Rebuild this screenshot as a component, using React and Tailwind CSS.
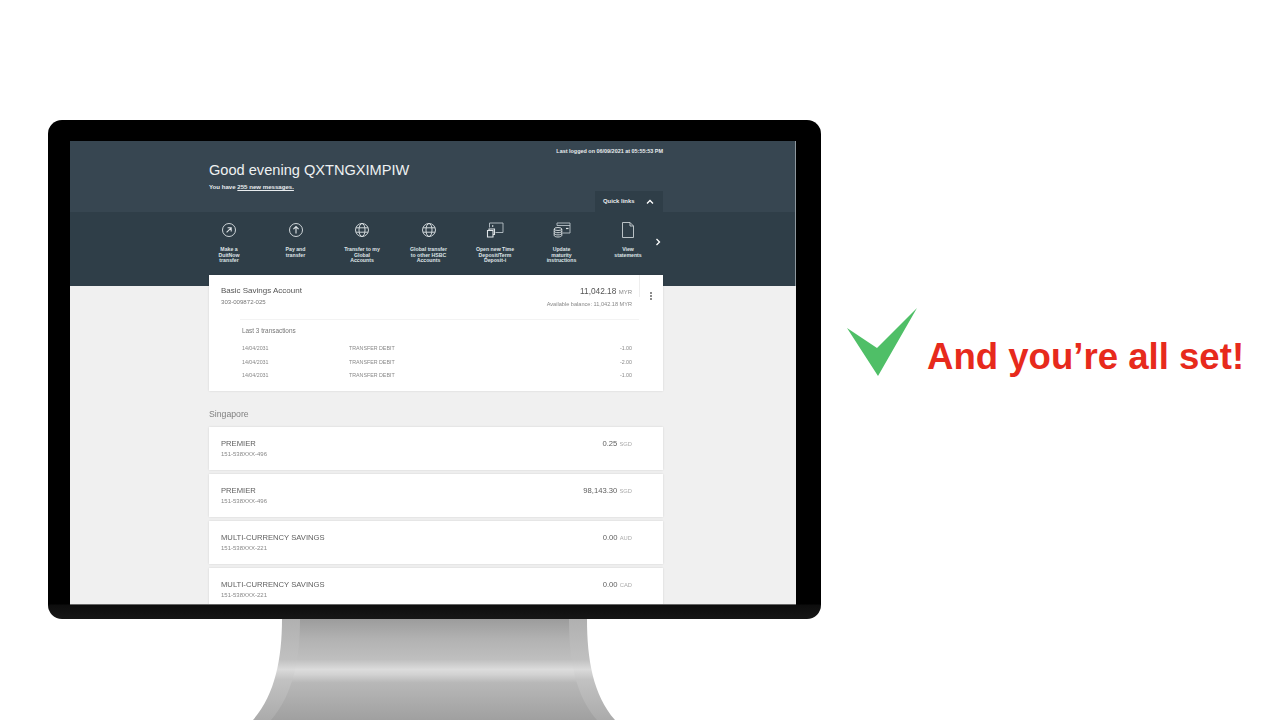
import React from "react";

const font = { fontFamily: '"Liberation Sans", Arial, sans-serif' };

const I = ({ children }) => (
  <svg width="18" height="18" viewBox="0 0 18 18" fill="none" stroke="#dfe4e7" strokeWidth="0.9" className="shrink-0">
    {children}
  </svg>
);

const icons = {
  out: (
    <I>
      <circle cx="9" cy="9" r="6.500" />
      <path d="M6.600 11.400 11.200 6.800M7.600 6.800h3.600v3.600" strokeWidth="1.100" />
    </I>
  ),
  up: (
    <I>
      <circle cx="9" cy="9" r="6.500" />
      <path d="M9 12.600V5.600M6.400 8.100 9 5.500l2.600 2.600" strokeWidth="1.100" />
    </I>
  ),
  globe: (
    <I>
      <circle cx="9" cy="9" r="6.500" />
      <ellipse cx="9" cy="9" rx="3" ry="6.500" />
      <path d="M3 6.800h12M3 11.200h12" />
    </I>
  ),
  deposit: (
    <I>
      <path d="M3.500 6.500V2h13.500v9.500H9.500" stroke="#b9c2c8" />
      <path d="M1.500 9.500h5.500v6.500H1.500z" strokeWidth="1.100" />
      <path d="M3 9.500V8h5.500v5.500H7" strokeWidth="1.100" />
      <path d="M6 5h1.300" strokeWidth="1.300" />
    </I>
  ),
  maturity: (
    <I>
      <path d="M4 4.500V2h13v10H9.500" stroke="#b9c2c8" />
      <path d="M4 4.500H17" stroke="#b9c2c8" />
      <path d="M13 7.500h2.500" strokeWidth="1.200" />
      <ellipse cx="5" cy="8" rx="3.800" ry="1.500" />
      <path d="M1.200 8v6.500c0 .8 1.700 1.500 3.800 1.500s3.800-.7 3.800-1.500V8M1.200 10.200c0 .8 1.700 1.500 3.800 1.500s3.800-.7 3.800-1.500M1.200 12.400c0 .8 1.700 1.500 3.800 1.500s3.800-.7 3.800-1.500" />
    </I>
  ),
  file: (
    <I>
      <path d="M3.500 1.500h7.500l3.500 3.500v11.500h-11z" stroke="#c9d0d4" />
      <path d="M11 1.500V5h3.500" stroke="#c9d0d4" />
    </I>
  ),
};

const links = [
  ["out", ["Make a", "DuitNow", "transfer"]],
  ["up", ["Pay and", "transfer"]],
  ["globe", ["Transfer to my", "Global", "Accounts"]],
  ["globe", ["Global transfer", "to other HSBC", "Accounts"]],
  ["deposit", ["Open new Time", "Deposit/Term", "Deposit-i"]],
  ["maturity", ["Update", "maturity", "instructions"]],
  ["file", ["View", "statements"]],
];

const accounts = [
  ["PREMIER", "151-538XXX-496", "0.25", "SGD"],
  ["PREMIER", "151-538XXX-496", "98,143.30", "SGD"],
  ["MULTI-CURRENCY SAVINGS", "151-538XXX-221", "0.00", "AUD"],
  ["MULTI-CURRENCY SAVINGS", "151-538XXX-221", "0.00", "CAD"],
];

const txns = [
  ["14/04/2031", "TRANSFER DEBIT", "-1.00"],
  ["14/04/2031", "TRANSFER DEBIT", "-2.00"],
  ["14/04/2031", "TRANSFER DEBIT", "-1.00"],
];

function Screen() {
  return (
    <div className="w-[726px] h-[463px] overflow-hidden bg-[#f0f0f0] blur-[0.4px] shadow-[0_1px_0_#666666]">
      <div className="h-[71px] bg-[#374651] border-r border-[#8d979d] pl-[139px] pr-[132px] relative">
        <div className="pt-[7px] text-right text-[5.450px] leading-[6px] font-bold text-[#e8ecee]">
          Last logged on 06/09/2021 at 05:55:53 PM
        </div>
        <div className="mt-[7px] text-[14.600px] leading-[18px] text-[#eef1f2]">Good evening QXTNGXIMPIW</div>
        <div className="mt-[4px] text-[6.100px] leading-[7px] font-bold text-[#e8ecee]">
          You have <span className="underline">255 new messages.</span>
        </div>
        <div className="absolute right-[132px] bottom-0 w-[68px] h-[21px] bg-[#2f3e48] flex items-center pl-[8px] text-[5.900px] font-bold text-[#e8ecee]">
          <span>Quick links</span>
          <svg width="8" height="6" viewBox="0 0 8 6" fill="none" stroke="white" strokeWidth="1.300" className="ml-[12px]">
            <path d="M1 4.500 4 1.500l3 3" />
          </svg>
        </div>
      </div>
      <div className="h-[74px] bg-[#2f3e48] border-r border-[#8d979d] pl-[139px] flex items-start">
        <div className="flex gap-[26.500px]">
          {links.map(([icon, lines], i) => (
            <div key={i} className="w-[40px] flex flex-col items-center pt-[9px]">
              {icons[icon]}
              <div className="mt-[8px] text-center text-[5.200px] leading-[5.700px] font-bold text-[#dfe4e7] whitespace-nowrap">
                {lines.map((l, j) => (
                  <div key={j}>{l}</div>
                ))}
              </div>
            </div>
          ))}
        </div>
        <svg width="6" height="8" viewBox="0 0 6 8" fill="none" stroke="white" strokeWidth="1.300" className="mt-[26px] ml-[7px]">
          <path d="M1.500 1 4.500 4 1.500 7" />
        </svg>
      </div>
      <div className="relative z-10 -mt-[11px] ml-[139px] w-[454px]">
        <div className="h-[116px] bg-white shadow-[0_0_2px_rgba(0,0,0,0.12)]">
          <div className="flex h-[44px]">
            <div className="flex-1 pl-[12px] pt-[11px]">
              <div className="text-[8px] leading-[10px] text-[#555]">Basic Savings Account</div>
              <div className="mt-[2px] text-[6.100px] leading-[8px] text-[#777]">303-009872-025</div>
            </div>
            <div className="pt-[11px] pr-[7px] text-right">
              <div className="text-[8.300px] leading-[10px] text-[#555]">
                11,042.18 <span className="text-[6px] text-[#888]">MYR</span>
              </div>
              <div className="mt-[3px] text-[5.600px] leading-[8px] text-[#888]">Available balance: 11,042.18 MYR</div>
            </div>
            <div className="w-[24px] flex flex-col">
              <div className="h-[22px] border-l border-[#eeeeee]" />
              <div className="flex flex-col items-center gap-[1.500px] -mt-[5px]">
                <span className="w-[1.500px] h-[1.500px] bg-[#666] rounded-full" />
                <span className="w-[1.500px] h-[1.500px] bg-[#666] rounded-full" />
                <span className="w-[1.500px] h-[1.500px] bg-[#666] rounded-full" />
              </div>
            </div>
          </div>
          <div className="ml-[31px] mr-[24px] border-t border-[#f3f3f3] pl-[2px] pr-[7px]">
            <div className="pt-[7px] text-[6.400px] leading-[7px] text-[#777]">Last 3 transactions</div>
            <div className="mt-[11px] flex flex-col gap-[6.500px]">
              {txns.map(([d, t, a], i) => (
                <div key={i} className="flex text-[5.300px] leading-[7px] text-[#888]">
                  <span className="w-[107px]">{d}</span>
                  <span className="flex-1">{t}</span>
                  <span>{a}</span>
                </div>
              ))}
            </div>
          </div>
        </div>
        <div className="mt-[18px] text-[8.700px] leading-[10px] text-[#808080] -translate-y-[0.5px]">Singapore</div>
        <div className="mt-[8px] flex flex-col gap-[4px]">
          {accounts.map(([n, id, v, c], i) => (
            <div key={i} className="h-[43px] shrink-0 bg-white shadow-[0_0_2px_rgba(0,0,0,0.12)] pl-[12px] pr-[31px] pt-[11.500px] flex justify-between">
              <div>
                <div className="text-[7.650px] leading-[10px] text-[#5f5f5f]">{n}</div>
                <div className="mt-[2px] text-[6px] leading-[7px] text-[#888]">{id}</div>
              </div>
              <div className="text-[7.650px] leading-[10px] text-[#5f5f5f]">
                {v} <span className="text-[5.800px] text-[#aaa]">{c}</span>
              </div>
            </div>
          ))}
        </div>
      </div>
    </div>
  );
}

function Stand() {
  return (
    <svg width="362" height="101" viewBox="0 0 362 101" className="block ml-[205px]">
      <defs>
        <linearGradient id="stand" x1="0" y1="0" x2="0" y2="1">
          <stop offset="0" stopColor="#9c9c9c" />
          <stop offset="0.2" stopColor="#b2b2b2" />
          <stop offset="0.4" stopColor="#bfbfbf" />
          <stop offset="0.5" stopColor="#dcdcdc" />
          <stop offset="0.55" stopColor="#d2d2d2" />
          <stop offset="0.63" stopColor="#b8b8b8" />
          <stop offset="1" stopColor="#a0a0a0" />
        </linearGradient>
        <linearGradient id="edge" x1="0" y1="0" x2="0" y2="1">
          <stop offset="0" stopColor="#b0b0b0" />
          <stop offset="0.4" stopColor="#c0c0c0" />
          <stop offset="0.5" stopColor="#dadada" />
          <stop offset="0.6" stopColor="#c2c2c2" />
          <stop offset="1" stopColor="#ababab" />
        </linearGradient>
      </defs>
      <path d="M29 0C29 40 22 76 0 101H362C340 76 334 40 334 0Z" fill="url(#edge)" />
      <path d="M47 0C47 40 40 76 18 101H344C322 76 316 40 316 0Z" fill="url(#stand)" />
    </svg>
  );
}

export default function App() {
  return (
    <div className="w-[1280px] h-[720px] overflow-hidden bg-white flex" style={font}>
      <div className="w-[821px] shrink-0 pl-[48px] pt-[120px]">
        <div className="w-[773px] h-[499px] rounded-[14px] bg-[linear-gradient(#000000,#000000_97%,#0d0d0d_97.2%,#161616)] pt-[21px] pl-[22px]">
          <Screen />
        </div>
        <Stand />
      </div>
      <div className="ml-[26px] pt-[308px] flex items-start">
        <svg width="70" height="68" viewBox="0 0 70 68" className="shrink-0">
          <path d="M0 20 30 40 70 0 31 68Z" fill="#4fbf67" />
        </svg>
        <div className="ml-[10px] mt-[29px] text-[36.600px] leading-[40px] font-bold text-[#e72a1c] whitespace-nowrap">
          And you’re all set!
        </div>
      </div>
    </div>
  );
}
